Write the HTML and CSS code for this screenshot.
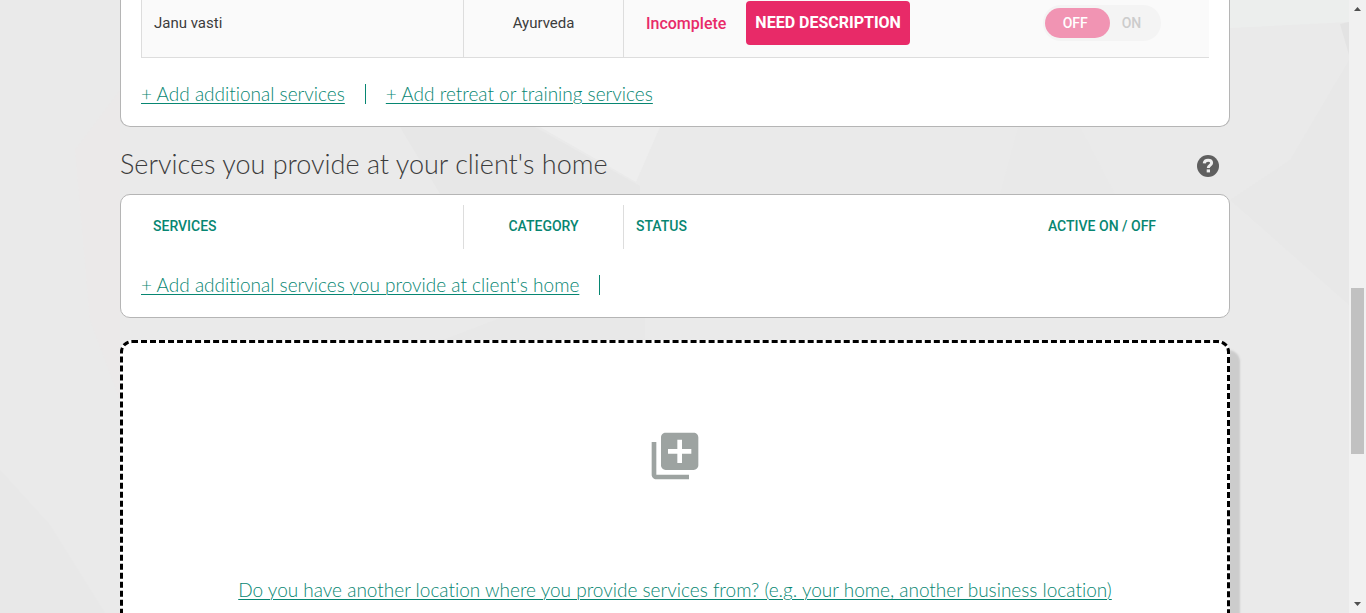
FILE: index.html
```html
<!DOCTYPE html>
<html lang="en">
<head>
<meta charset="utf-8">
<meta name="viewport" content="width=device-width, initial-scale=1">
<title>Services</title>
<link rel="stylesheet" href="styles.css">
</head>
<body>
<div class="window">
  <main class="page">
    <svg class="backdrop" viewBox="0 0 1349 613" preserveAspectRatio="none" aria-hidden="true">
      <path fill="#e7e7e7" d="M535 127 640 186V194H440L400 127z"/>
      <path fill="#eeeeee" d="M540 127H660L636 182z"/>
      <path fill="#e9e9e9" d="M1018 127H1080L1115 194H1000z"/>
      <path fill="#eceeed" d="M1230 0H1349V22L1230 28z"/>
      <path fill="#e3e3e3" d="M1340 24 1349 22V55z"/>
      <path fill="#e8e8e8" d="M1230 200 1349 305V60L1290 160z"/>
      <path fill="#e8e8e8" d="M440 341 500 318H645V341z"/>
      <path fill="#e8e8e8" d="M0 470 50 525 105 613H0z"/>
      <path fill="#ebe9e9" d="M75 150 120 90V400L90 320z"/>
    </svg>
    <div class="content">
      <section class="card card-continued">
        <table class="services services-rows">
          <tbody>
            <tr>
              <td class="col-service">Janu vasti</td>
              <td class="col-category">Ayurveda</td>
              <td class="col-status">
                <div class="status"><span class="status-text">Incomplete</span><button type="button" class="need">NEED DESCRIPTION</button></div>
              </td>
              <td class="col-active">
                <label class="toggle"><input type="checkbox" role="switch" aria-label="Janu vasti active" disabled><span class="off">OFF</span><span class="on">ON</span></label>
              </td>
            </tr>
          </tbody>
        </table>
        <nav class="links">
          <span class="link-item"><a href="#">+ Add additional services</a></span>
          <a href="#">+ Add retreat or training services</a>
        </nav>
      </section>

      <header class="section-head">
        <h2>Services you provide at your client's home</h2>
        <button type="button" class="help" aria-label="Help">
          <svg viewBox="0 0 22 22" width="22" height="22"><circle cx="11" cy="11" r="11" fill="#5f5f5f"/><path d="M7.200 8.400C7.500 6.200 8.900 5.200 11.100 5.200c2.200 0 3.500 1.100 3.500 2.800 0 2.400-3.300 2.400-3.300 4.900" fill="none" stroke="#eee" stroke-width="3"/><path d="M9.700 14.400h3.300V17.400H9.700z" fill="#eee"/></svg>
        </button>
      </header>

      <section class="card card-home">
        <table class="services">
          <thead>
            <tr>
              <th class="col-service" scope="col">SERVICES</th>
              <th class="col-category" scope="col">CATEGORY</th>
              <th class="col-status" scope="col">STATUS</th>
              <th class="col-active" scope="col">ACTIVE ON / OFF</th>
            </tr>
          </thead>
        </table>
        <nav class="links">
          <span class="link-item"><a href="#">+ Add additional services you provide at client's home</a></span>
        </nav>
      </section>

      <section class="add-location">
        <svg class="add-icon" viewBox="0 0 24 24" width="56" height="56" aria-hidden="true"><path fill="#9da3a1" d="M4 6H2v14c0 1.100.9 2 2 2h14v-2H4V6zm16-4H8c-1.100 0-2 .9-2 2v12c0 1.100.9 2 2 2h12c1.100 0 2-.9 2-2V4c0-1.100-.9-2-2-2zm-1 9h-4v4h-2v-4H9V9h4V5h2v4h4v2z"/></svg>
        <a href="#">Do you have another location where you provide services from? (e.g. your home, another business location)</a>
      </section>
    </div>
  </main>
  <div class="scrollbar" aria-hidden="true">
    <svg viewBox="0 0 17 17" width="17" height="17"><path d="M5 11h7L8.500 7z" fill="#505050"/></svg>
    <div class="track"><div class="thumb"></div></div>
    <svg viewBox="0 0 17 17" width="17" height="17"><path d="M5 6h7l-3.500 4z" fill="#505050"/></svg>
  </div>
</div>
</body>
</html>
```
FILE: styles.css
```css
* { box-sizing: border-box; }

body {
  margin: 0;
  font-family: Lato, "Liberation Sans", sans-serif;
  font-variant-ligatures: none;
  color: #3c3c3c;
}

.window {
  display: flex;
  height: 100vh;
  overflow: hidden;
}

.page {
  position: relative;
  flex: 1;
  overflow: hidden;
  background: #eaeaea;
}

.backdrop {
  position: absolute;
  inset: 0;
  width: 100%;
  height: 100%;
}

.content {
  position: relative;
  padding: 0 119px 0 120px;
}

.card {
  padding: 10px 20px 22px;
  border: 1px solid #b5b5b5;
  border-radius: 10px;
  background: #fff;
}

.card-continued {
  padding-top: 0;
  border-top: 0;
  border-radius: 0 0 10px 10px;
}

.services {
  width: 100%;
  table-layout: fixed;
  border-collapse: separate;
  border-spacing: 0;
  font-family: Roboto, "Liberation Sans", sans-serif;
}

.services th {
  height: 44px;
  padding: 0 12px 2px;
  font-size: 14px;
  font-weight: 500;
  color: #078672;
}

.services td {
  height: 58px;
  padding: 1px 12px 12px;
  border-bottom: 1px solid #ddd;
  background: #fafafa;
  font-size: 15px;
  vertical-align: middle;
}

.services td:first-child { border-left: 1px solid #ddd; }

.services .col-service {
  width: 323px;
  border-right: 1px solid #ddd;
  text-align: left;
}

.services .col-category {
  width: 160px;
  border-right: 1px solid #ddd;
  text-align: center;
}

.services .col-status { text-align: left; }
.services .col-active { width: 214px; text-align: center; }

.status {
  display: flex;
  align-items: center;
  gap: 20px;
  padding-left: 10px;
}

.status-text {
  font-size: 16px;
  font-weight: 500;
  color: #e82a68;
}

.need {
  height: 44px;
  padding: 0 9px 2px;
  border: 0;
  border-radius: 4px;
  background: #e82a68;
  color: #fff;
  font: 700 16px Roboto, "Liberation Sans", sans-serif;
  white-space: nowrap;
}

.toggle {
  position: relative;
  display: inline-flex;
  align-items: center;
  height: 36px;
  padding: 0 20px 0 2px;
  border-radius: 18px;
  background: #f4f4f4;
  font-size: 14px;
  font-weight: 500;
  color: #ccc;
}

.toggle input {
  position: absolute;
  inset: 0;
  margin: 0;
  opacity: 0;
}

.toggle .off {
  width: 65px;
  margin-right: 12px;
  padding-right: 4px;
  border-radius: 15px;
  background: #f194b3;
  color: #fff;
  line-height: 30px;
}

a {
  color: #078672;
  text-decoration-thickness: 1px;
  text-underline-offset: 2px;
}

.links {
  display: flex;
  gap: 20px;
  margin-top: 26px;
  font-size: 19px;
  font-weight: 300;
  line-height: 20px;
}

.link-item {
  padding-right: 20px;
  border-right: 1px solid #078672;
}

.section-head {
  display: flex;
  align-items: center;
  justify-content: space-between;
  height: 67px;
  padding: 10px 11px 0 0;
}

.section-head h2 {
  margin: 0;
  padding-bottom: 4px;
  font-size: 27px;
  font-weight: 300;
}

.help {
  display: flex;
  padding: 0;
  border: 0;
  background: none;
}

.add-location {
  display: flex;
  flex-direction: column;
  align-items: center;
  gap: 96px;
  margin-top: 22px;
  padding: 85px 20px 96px;
  border: 3px dashed #000;
  border-radius: 12px;
  background: #fff;
  box-shadow: 10px 10px 2px #ccc;
  font-size: 19px;
  font-weight: 300;
  line-height: 20px;
}

.scrollbar {
  display: flex;
  flex-direction: column;
  width: 17px;
  background: #f1f1f1;
}

.track {
  display: grid;
  flex: 1;
  grid-template-rows: 271fr 166fr 142fr;
  padding: 0 2px;
}

.thumb { grid-row: 2; background: #c1c1c1; }
```
